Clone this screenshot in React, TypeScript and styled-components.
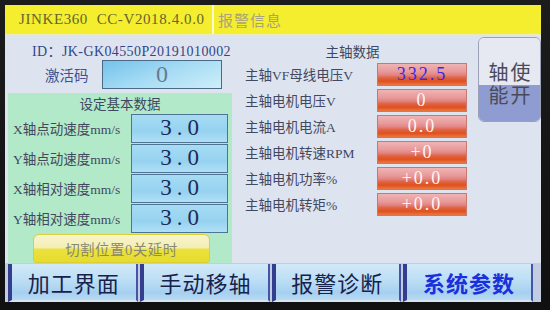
import React from "react";
import styled, { createGlobalStyle } from "styled-components";

const Global = createGlobalStyle`
  html, body { margin: 0; padding: 0; background: #161616; }
  body { width: 550px; height: 310px; overflow: hidden; }
  * { box-sizing: border-box; }
`;

const FONT = `"Liberation Serif", "Noto Sans CJK SC", serif`;

const Bezel = styled.div`
  width: 550px;
  height: 310px;
  padding: 5px 9px 8px 5px;
  background: linear-gradient(180deg, #1c1c1c, #101010);
  font-family: ${FONT};
`;

const Screen = styled.div`
  width: 536px;
  height: 297px;
  display: grid;
  grid-template-rows: 30px 228px 39px;
  background: #dde4ef;
  overflow: hidden;
`;

const Header = styled.div`
  display: flex;
  background: #f4ee2e;
  border-bottom: 1px solid #e8ecc0;
`;

const HeaderCell = styled.div<{ $w?: number; $muted?: boolean }>`
  ${(p) => (p.$w ? `width: ${p.$w}px;` : "flex: 1;")}
  display: flex;
  align-items: center;
  padding-left: ${(p) => (p.$muted ? 4 : 14)}px;
  font-size: 15px;
  letter-spacing: ${(p) => (p.$muted ? 1 : 0.6)}px;
  color: ${(p) => (p.$muted ? "#a8a47a" : "#66642e")};
  white-space: nowrap;
`;

const HeaderDivider = styled.div`
  width: 2px;
  background: #fbf9d0;
`;

const Content = styled.div`
  display: flex;
`;

const LeftCol = styled.div`
  width: 228px;
  display: flex;
  flex-direction: column;
  padding-left: 3px;
  padding-right: 1px;
`;

const IdRow = styled.div`
  height: 25px;
  padding-top: 4px;
  padding-left: 24px;
  display: flex;
  align-items: center;
  font-size: 14px;
  color: #34448a;
  letter-spacing: 0.4px;
  white-space: nowrap;
`;

const ActRow = styled.div`
  height: 29px;
  display: flex;
  align-items: center;
  padding-left: 37px;
`;

const ActLabel = styled.span`
  font-size: 14.5px;
  color: #3e5296;
  width: 57px;
`;

const ActBox = styled.div`
  width: 120px;
  height: 29px;
  border: 1px solid #4a6a86;
  background: linear-gradient(160deg, #74c2ea 0%, #a6dcf4 50%, #cfeefa 100%);
  display: flex;
  align-items: center;
  justify-content: center;
  font-size: 24px;
  color: #6a7a92;
`;

const GreenPanel = styled.div`
  margin-top: 4px;
  flex: 1;
  background: #b2eac9;
  display: flex;
  flex-direction: column;
`;

const PanelTitle = styled.div<{ $h: number }>`
  height: ${(p) => p.$h}px;
  display: flex;
  align-items: center;
  justify-content: center;
  font-size: 13.5px;
  color: #3e4864;
`;

const SetRow = styled.div`
  height: 30px;
  display: flex;
  align-items: center;
  padding-left: 5px;
  padding-right: 4px;
`;

const RowLabel = styled.span`
  font-size: 13.5px;
  color: #42485f;
  white-space: nowrap;
`;

const CyanBox = styled.div`
  margin-left: auto;
  width: 97px;
  height: 29px;
  border: 1px solid #4e7494;
  background: linear-gradient(180deg, #a6dcf4 0%, #96d2f0 60%, #b0e0f6 100%);
  display: flex;
  align-items: center;
  justify-content: center;
  font-size: 23px;
  letter-spacing: 5px;
  padding-left: 5px;
  color: #1c2a58;
`;

const YellowButtonWrap = styled.div`
  height: 30px;
  padding-left: 25px;
  padding-top: 1px;
`;

const YellowButton = styled.div`
  width: 177px;
  height: 29px;
  border-radius: 6px 6px 3px 3px;
  border: 1px solid #d8cf3a;
  background: linear-gradient(180deg, #f8f4cc 0%, #f3eeb4 48%, #ebe23e 52%, #e6dc2c 100%);
  display: flex;
  align-items: center;
  justify-content: center;
  font-size: 14.5px;
  color: #8a8870;
  letter-spacing: 0.5px;
`;

const MidCol = styled.div`
  width: 239px;
  display: flex;
  flex-direction: column;
  padding-top: 5px;
`;

const DataRow = styled.div`
  height: 26px;
  display: flex;
  align-items: center;
  padding-left: 12px;
  padding-right: 5px;
`;

const RedBox = styled.div<{ $accent?: boolean }>`
  margin-left: auto;
  width: 90px;
  height: 23px;
  border: 1px solid #c8786c;
  background: linear-gradient(
    180deg,
    #f0b4b4 0%,
    #e89a9a 35%,
    #e28484 52%,
    #e0664a 64%,
    #e0501c 82%,
    #ea7844 100%
  );
  display: flex;
  align-items: center;
  justify-content: center;
  font-size: 18px;
  letter-spacing: 2px;
  color: ${(p) => (p.$accent ? "#3b28e6" : "#fff4f2")};
`;

const RightCol = styled.div`
  flex: 1;
  padding-left: 6px;
  padding-top: 2px;
`;

const EnableButton = styled.div`
  width: 63px;
  height: 85px;
  border-radius: 6px;
  border: 1px solid #9aa0b8;
  overflow: hidden;
  display: flex;
  flex-direction: column;
  font-size: 20px;
  color: #4a4b58;
  letter-spacing: 2px;
`;

const EnableHalf = styled.div<{ $bottom?: boolean }>`
  height: ${(p) => (p.$bottom ? 37 : 48)}px;
  background: ${(p) => (p.$bottom ? "#8e9cd2" : "#e6e8f2")};
  display: flex;
  justify-content: center;
  align-items: ${(p) => (p.$bottom ? "flex-start" : "flex-end")};
  line-height: 22px;
  padding-left: 2px;
  padding-bottom: ${(p) => (p.$bottom ? 0 : 1)}px;
`;

const TabBar = styled.div`
  display: flex;
  gap: 2px;
  padding: 1px 8px 0 3px;
  background: #c2cde2;
`;

const Tab = styled.div<{ $active?: boolean }>`
  flex: 1;
  display: flex;
  align-items: center;
  justify-content: center;
  border-left: 4px solid #333f8e;
  border-right: 2px solid #4454a8;
  border-bottom: 2px solid #d6e4f2;
  background: linear-gradient(180deg, #d2e9f8 0%, #bcdef5 45%, #a6d0f0 80%, #b8daf2 100%);
  font-size: 22px;
  letter-spacing: 1px;
  color: ${(p) => (p.$active ? "#1a30dc" : "#18214c")};
  font-weight: ${(p) => (p.$active ? 700 : 400)};
`;

const setRows = ["X轴点动速度mm/s", "Y轴点动速度mm/s", "X轴相对速度mm/s", "Y轴相对速度mm/s"];

const spindle: { label: string; value: string; accent?: boolean }[] = [
  { label: "主轴VF母线电压V", value: "332.5", accent: true },
  { label: "主轴电机电压V", value: "0" },
  { label: "主轴电机电流A", value: "0.0" },
  { label: "主轴电机转速RPM", value: "+0" },
  { label: "主轴电机功率%", value: "+0.0" },
  { label: "主轴电机转矩%", value: "+0.0" },
];

const tabs = ["加工界面", "手动移轴", "报警诊断", "系统参数"];

export default function App() {
  return (
    <>
      <Global />
      <Bezel>
        <Screen>
          <Header>
            <HeaderCell $w={207}>JINKE360&nbsp;&nbsp;CC-V2018.4.0.0</HeaderCell>
            <HeaderDivider />
            <HeaderCell $muted>报警信息</HeaderCell>
          </Header>
          <Content>
            <LeftCol>
              <IdRow>ID：JK-GK04550P20191010002</IdRow>
              <ActRow>
                <ActLabel>激活码</ActLabel>
                <ActBox>0</ActBox>
              </ActRow>
              <GreenPanel>
                <PanelTitle $h={20}>设定基本数据</PanelTitle>
                {setRows.map((l) => (
                  <SetRow key={l}>
                    <RowLabel>{l}</RowLabel>
                    <CyanBox>3.0</CyanBox>
                  </SetRow>
                ))}
                <YellowButtonWrap>
                  <YellowButton>切割位置0关延时</YellowButton>
                </YellowButtonWrap>
              </GreenPanel>
            </LeftCol>
            <MidCol>
              <PanelTitle $h={21}>主轴数据</PanelTitle>
              {spindle.map((r) => (
                <DataRow key={r.label}>
                  <RowLabel>{r.label}</RowLabel>
                  <RedBox $accent={r.accent}>{r.value}</RedBox>
                </DataRow>
              ))}
            </MidCol>
            <RightCol>
              <EnableButton>
                <EnableHalf>轴使</EnableHalf>
                <EnableHalf $bottom>能开</EnableHalf>
              </EnableButton>
            </RightCol>
          </Content>
          <TabBar>
            {tabs.map((t, i) => (
              <Tab key={t} $active={i === 3}>
                {t}
              </Tab>
            ))}
          </TabBar>
        </Screen>
      </Bezel>
    </>
  );
}
